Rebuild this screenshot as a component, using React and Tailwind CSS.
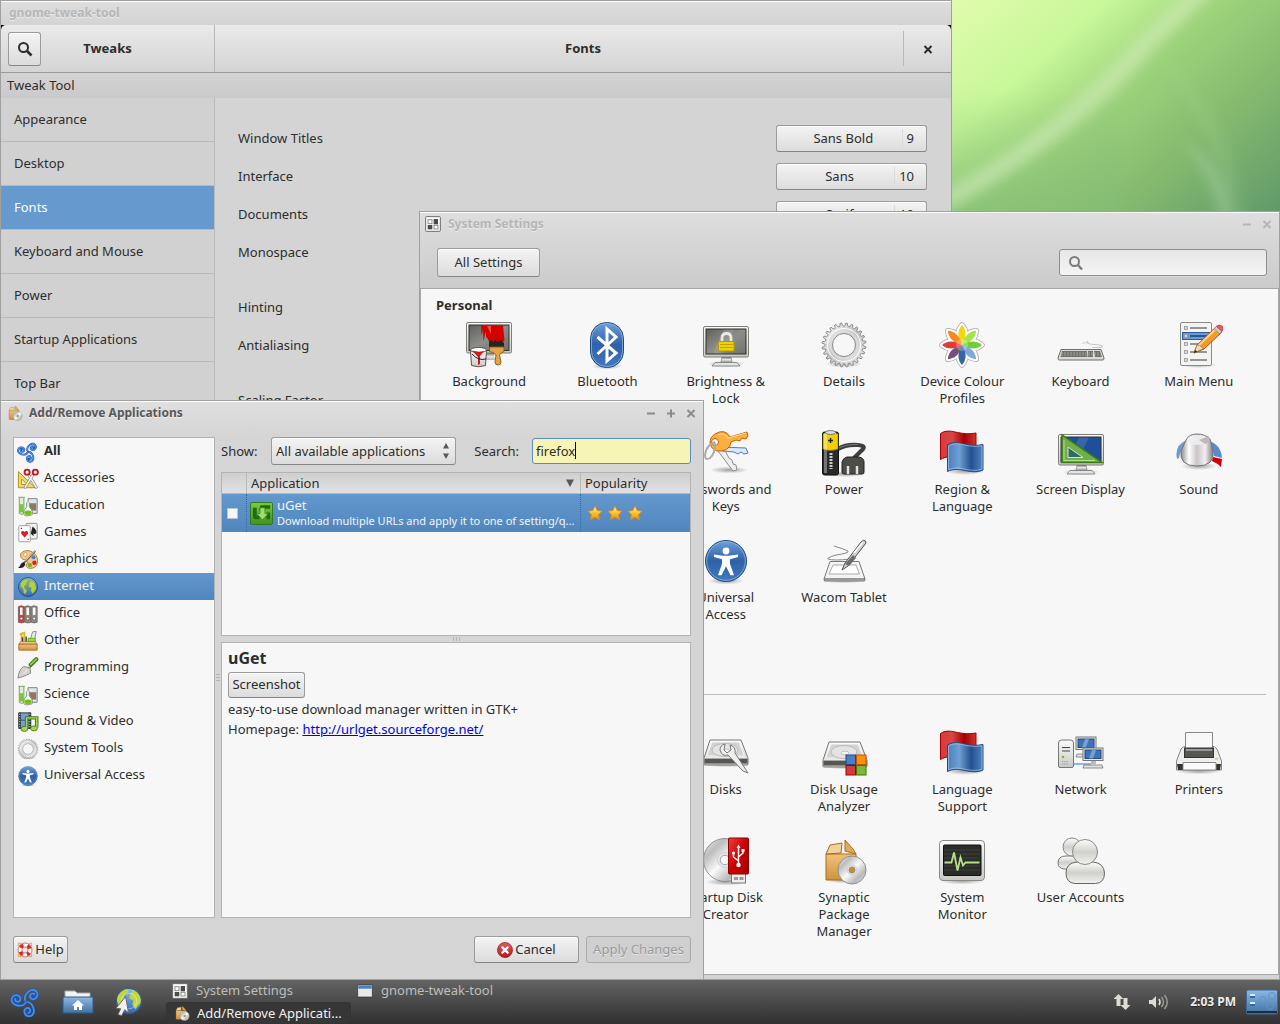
import React, { useState } from 'react'

/* ---------- shared drawing pieces ---------- */

// gradients used by most of the icons
function IconDefs() {
  const v = { x1: 0, y1: 0, x2: 0, y2: 1 }
  const h = { x1: 0, y1: 0, x2: 1, y2: 0 }
  const d = { x1: 0, y1: 0, x2: 1, y2: 1 }
  const grads = [
    ['screen', d, ['#5f605c', '#8d8e89', '#6f706b']],
    ['frame', v, ['#fafaf9', '#c9cac6']],
    ['stand', v, ['#6c6d69', '#e4e5e2', '#b4b5b1']],
    ['blue', v, ['#6f9fd6', '#2d61a8', '#4279bf']],
    ['globe', v, ['#8fbdf0', '#2f68b4']],
    ['metal', d, ['#ffffff', '#c4c4c4', '#f2f2f2']],
    ['disc', d, ['#f4f4f4', '#bdbdbd', '#fafafa', '#b9b9b9', '#eeeeee']],
    ['redflag', h, ['#d83a3a', '#d94545', '#a50000', '#d13434']],
    ['blueflag', h, ['#4c7fc0', '#6f9fd3', '#234f8f', '#5384c2']],
    ['wood', v, ['#f0c27c', '#cf923c']],
    ['knob', h, ['#8b8688', '#ffffff', '#c9c4c6', '#f3eef3', '#7d797b']],
    ['person', v, ['#ffffff', '#cfd0cb', '#f2f2f0']],
    ['star', v, ['#fff9b0', '#fbc52a', '#f08a12']],
    ['green', v, ['#7ccb3c', '#3f9420']],
    ['red', v, ['#e65b5b', '#b8161c']],
    ['usb', d, ['#f04040', '#cc0000', '#a40000']],
    ['folder', v, ['#8db8e4', '#41719f']],
  ]
  return (
    <svg width="0" height="0" className="absolute" aria-hidden="true">
      <defs>
        {grads.map(([id, dir, stops]) => (
          <linearGradient key={id} id={id} {...dir}>
            {stops.map((c, i) => <stop key={i} offset={i / (stops.length - 1)} stopColor={c} />)}
          </linearGradient>
        ))}
        <radialGradient id="shade">
          <stop offset="0" stopColor="#000" stopOpacity=".35" />
          <stop offset="1" stopColor="#000" stopOpacity="0" />
        </radialGradient>
      </defs>
    </svg>
  )
}

const gearPath = (() => {
  const n = 24
  let d = ''
  for (let i = 0; i < n; i++) {
    const pt = (r, o) => {
      const a = ((i + o) / n) * Math.PI * 2
      return `${(24 + r * Math.cos(a)).toFixed(1)} ${(24 + r * Math.sin(a)).toFixed(1)}`
    }
    d += `${i ? 'L' : 'M'}${pt(18.6, 0)}Q${pt(18.8, 0.25)} ${pt(22, 0.32)}L${pt(22, 0.58)}Q${pt(18.8, 0.7)} ${pt(18.6, 1)}`
  }
  return d + 'Z'
})()

const Shadow = ({ y = 43, rx = 20 }) => <ellipse cx="24" cy={y} rx={rx} ry="3.5" fill="url(#shade)" />

function Monitor({ children, screen = 'url(#screen)' }) {
  return (
    <>
      <Shadow y={43} rx={18} />
      <path d="M20 36h9l1 5h-11z" fill="url(#stand)" stroke="#777" strokeWidth=".6" />
      <path d="M13 41.5h22l3 3.5H10z" fill="#e3e4e1" stroke="#777" strokeWidth=".8" />
      <rect x="1.500" y="5.500" width="45" height="30.500" rx="1.500" fill="url(#frame)" stroke="#7d7e7a" />
      <rect x="4" y="8" width="40" height="25" fill={screen} stroke="#30302e" />
      <path d="M22 8.500h10L20 32.500h-9z" fill="#fff" opacity=".13" />
      {children}
    </>
  )
}

function Flags() {
  return (
    <>
      <ellipse cx="27" cy="42" rx="20" ry="4" fill="url(#shade)" />
      <path d="M2.500 4.500c6-4 12-2 17-1s12 2 18.500.500v24c-7 2-13 1-18 0s-12-1-17.500 2.500z" fill="url(#redflag)" stroke="#a40000" />
      <path d="M9.500 16c6-4 12-2 17-1s12 2 18.500.500v25.500c-6 3-13 1.500-18 .500s-12-2-17.500 1z" fill="url(#blueflag)" stroke="#204a87" />
      <path d="M10.500 17c6-3.500 11-2 16-1s11 2 17.500.700v23.500c-6 2-12 1-17 0s-11-2-16.500.500z" fill="none" stroke="#a8c6ea" strokeWidth=".7" />
    </>
  )
}

function Gear() {
  return (
    <>
      <Shadow y={43} rx={18} />
      <path d={gearPath} fill="url(#metal)" stroke="#8a8a8a" strokeWidth="1" />
      <circle cx="24" cy="24" r="16.500" fill="none" stroke="#fff" strokeWidth="1" />
      <circle cx="24" cy="24" r="11.500" fill="#f7f7f7" stroke="#8a8a8a" />
      <circle cx="24" cy="24" r="13.500" fill="none" stroke="#ddd" strokeWidth="1.500" />
    </>
  )
}

function Access() {
  return (
    <>
      <Shadow y={44} rx={18} />
      <circle cx="24" cy="24" r="20.500" fill="url(#blue)" stroke="#204a87" />
      <circle cx="24" cy="24" r="19.300" fill="none" stroke="#8fb4e0" strokeWidth=".8" />
      <circle cx="24" cy="14" r="3.400" fill="#fff" />
      <path d="M12 17.500l9 1.200h6l9-1.200v2.500l-8 2.200v4.500l4 11.500h-3.500l-4.500-9-4.500 9H16l4-11.500v-4.500l-8-2.200z" fill="#fff" />
    </>
  )
}

function Disc({ cx, cy, r, hole = '#f7f7f7' }) {
  return (
    <>
      <circle cx={cx} cy={cy} r={r} fill="url(#disc)" stroke="#888" strokeWidth=".9" />
      <circle cx={cx} cy={cy} r={r * 0.35} fill="#e6e6e6" stroke="#bbb" strokeWidth=".5" />
      <circle cx={cx} cy={cy} r={r * 0.22} fill={hole} stroke="#888" strokeWidth=".7" />
    </>
  )
}

function Drive() {
  return (
    <>
      <Shadow y={39} rx={22} />
      <path d="M8 15h31l7 18v6q0 1-1 1H3q-1 0-1-1v-6z" fill="url(#frame)" stroke="#777" />
      <path d="M2.500 33h43v5.500h-43z" fill="#555753" />
      <path d="M2.500 33h43" stroke="#fff" />
      <path d="M10 17h27l5.500 14H4.500z" fill="#d3d3d3" stroke="#fff" strokeWidth=".8" />
      <ellipse cx="23" cy="25" rx="13" ry="6.500" fill="#e4e4e4" stroke="#b0b0b0" strokeWidth=".8" />
      <ellipse cx="24" cy="26" rx="4" ry="1.800" fill="#f7f7f7" stroke="#aaa" strokeWidth=".6" />
    </>
  )
}

function Triskelion() {
  return (
    <g fill="none" strokeLinecap="round">
      {[-45, 75, 195].map(a => (
        <g key={a} transform={`translate(12 12) rotate(${a})`}>
          <path d="M0 0C1-5.500 11-5.500 11-.5C11 4 4.500 4.300 4.500.500C4.500-2 8.600-2.200 8.500.300C8.400 1.500 7 1.300 7 .600" stroke="#1c57b0" strokeWidth="2" />
          <path d="M0 0C1-5.500 11-5.500 11-.5C11 4 4.500 4.300 4.500.500C4.500-2 8.600-2.200 8.500.300" stroke="#4a8fe8" strokeWidth="1.200" />
        </g>
      ))}
    </g>
  )
}

function PackageBox() {
  return (
    <>
      <Shadow y={43} rx={18} />
      <path d="M6 17h30v26H6z" fill="url(#wood)" stroke="#a56b1e" />
      <path d="M6 17l4-9 12-2-1 10z" fill="#f3d29a" stroke="#a56b1e" />
      <path d="M36 17l-3-5-8-9v11z" fill="#e2ac5c" stroke="#a56b1e" />
      <Disc cx={32} cy={33} r={14} hole="#c98d2c" />
    </>
  )
}

function Pencil() {
  return (
    <>
      <path d="M16 32l3-8L38 6l6 5-18 17z" fill="#f29a2e" stroke="#9a5a12" />
      <path d="M20 25L39 7" stroke="#ffd08a" strokeWidth="2" />
      <path d="M36 7.500l2.500-2.200 5.500 5-2.500 2.500z" fill="#ccc" stroke="#777" strokeWidth=".6" />
      <path d="M38.500 5.300q3-2.500 5.800 0t-.3 5z" fill="#ef5a5a" stroke="#b33" strokeWidth=".7" />
      <path d="M16 32l3-8 2.500.500 4 3z" fill="#f3dcb6" stroke="#8d6a36" strokeWidth=".6" />
      <path d="M16 32l1.200-3 2 1.500z" fill="#222" />
    </>
  )
}

const petals = ['#f3d612', '#a9e34b', '#6fcf35', '#7fa8dd', '#3465a4', '#75507b', '#e03b3b', '#f68a1e']
const petal = 'M0 0C-5-8-4.500-15 0-20C4.500-15 5-8 0 0'

const icons = {
  background: (
    <>
      <rect x="1.500" y="1.500" width="45" height="30.500" rx="1.500" fill="url(#frame)" stroke="#7d7e7a" />
      <rect x="4" y="4" width="40" height="25.500" fill="url(#screen)" stroke="#30302e" />
      <path d="M20 32h9l1 7H19z" fill="url(#stand)" />
      <path d="M16 4.500h22l1.500 15q-2 3-4 1-2 2-4 0t-4 1-4-2-2-2l-1-7-2 10-.500-12-1.500 6z" fill="#d40000" />
      <path d="M22 5h4v8z" fill="#ff4a4a" />
      <path d="M24 21l2-2 2 2 2-2 3 2 3-2 3 3v4H24z" fill="#252525" />
      <path d="M24.500 26h14.500v4.500q-4 1.500-4.500 3.500l1.500 7q0 3-3 3t-3-3l1-7q-2-3-6.500-3.500z" fill="#e4a24a" stroke="#8b5716" strokeWidth=".9" />
      <path d="M5.500 29.500l1 15q7 2.500 14 0l1-15z" fill="url(#frame)" stroke="#555" />
      <ellipse cx="13.500" cy="29" rx="8" ry="2.500" fill="#fff" stroke="#555" />
      <path d="M7 29.500q6 2 12 .500l-4 5v8l-2 1v-8z" fill="#d3171d" />
      <path d="M7 33q6 7 14 5" fill="none" stroke="#222" />
    </>
  ),
  bluetooth: (
    <>
      <Shadow y={45} rx={15} />
      <rect x="7.500" y="1.500" width="33" height="45" rx="16" fill="url(#blue)" stroke="#204a87" />
      <rect x="8.500" y="2.500" width="31" height="43" rx="15" fill="none" stroke="#8fb4e0" strokeWidth=".8" />
      <path d="M14.500 16L33 32l-9 8V8l9 8L14.500 33" fill="none" stroke="#fff" strokeWidth="3" />
    </>
  ),
  brightness: (
    <Monitor>
      <path d="M20 21v-4q0-4.500 4.500-4.500T29 17v4" fill="none" stroke="#e8e8e8" strokeWidth="2.800" />
      <rect x="16.500" y="20.500" width="15.500" height="9.500" rx="1" fill="#edd400" stroke="#b59b00" />
      <path d="M18 23.500h13M18 26.500h13" stroke="#c4a000" />
    </Monitor>
  ),
  details: <Gear />,
  colour: (
    <g transform="translate(24 24)">
      {petals.map((c, i) => (
        <path key={c} d={petal} transform={`rotate(${i * 45})`} fill="#fff" stroke="#a9a9a9" strokeWidth="5.500" strokeLinejoin="round" />
      ))}
      {petals.map((c, i) => (
        <path key={c} d={petal} transform={`rotate(${i * 45})`} fill="#fff" stroke="#fff" strokeWidth="4" strokeLinejoin="round" />
      ))}
      <circle r="12" fill="#fff" />
      {petals.map((c, i) => (
        <path key={c} d={petal} transform={`rotate(${i * 45})`} fill={c} />
      ))}
      <circle r="6" fill="#fff" opacity=".25" />
    </g>
  ),
  keyboard: (
    <>
      <path d="M31 20q-2 2 2 3l9 1q5 1 2 2.500h-9" fill="none" stroke="#c6c6c6" strokeWidth="1.200" />
      <path d="M26 23q-1-2 6-1" fill="none" stroke="#d0d0d0" />
      <path d="M4 28.500h40l3 8.500q0 2-1 2H2q-1 0-1-2z" fill="#d9dad7" stroke="#6e6f6b" />
      <path d="M5 30h25l.500 6H3.500zM31 30h5v6h-5zM37 30h6l2 6h-7z" fill="#6f706b" />
      <path d="M4 32h40M4 34h41" stroke="#d9dad7" strokeWidth=".5" strokeDasharray="2 1" />
    </>
  ),
  menu: (
    <>
      <ellipse cx="23" cy="44" rx="18" ry="3" fill="url(#shade)" />
      <rect x="5.500" y="1.500" width="31" height="43" rx="1.500" fill="#f3f3f2" stroke="#8b8b89" />
      {[7, 15, 23, 31, 39].map((y, i) => (
        <g key={y}>
          {i === 1 && <rect x="7.500" y="11.500" width="27" height="7" fill="#6d98d0" stroke="#2a5ca0" />}
          <rect x="9.500" y={y - 1.5} width="3" height="3" fill="#d5d5d5" stroke="#999" strokeWidth=".8" />
          <path d={`M15 ${y}h17`} stroke={i === 1 ? '#234f8f' : '#8b8b89'} strokeWidth="1.800" />
        </g>
      ))}
      <g transform="translate(3 0)"><Pencil /></g>
    </>
  ),
  keys: (
    <>
      <ellipse cx="27" cy="41" rx="19" ry="3.500" fill="url(#shade)" />
      <path d="M16 22l15 20 4-1-1-5-3-1-1-4-3-2-5-9z" fill="#eee" stroke="#8d8f8a" />
      <path d="M18 18l26 1 2 5-4 1-3-2-3 2-4-2-12-1z" fill="#dbe8f8" stroke="#4c7fc0" />
      <path d="M13 5q10-6 15 3l17-5 1 4-2 3-4-1-2 3-4-1-5 2q-1 8-10 9T8 14q0-6 5-9z" fill="#fbb040" stroke="#ce5c00" />
      <path d="M16 6q6-3 10 3l18-5" fill="none" stroke="#ffe0a0" />
      <circle cx="13" cy="13" r="3.500" fill="#f7f7f7" stroke="#ce5c00" />
      <path d="M13 13Q4 16 3 26q0 6 5 3 5-4 5-15" fill="none" stroke="#aaaca7" strokeWidth="2" />
    </>
  ),
  power: (
    <>
      <ellipse cx="25" cy="45" rx="22" ry="3" fill="url(#shade)" />
      <path d="M18 20q8-5 20-4c7 .500 7 3 3 6l-7 7" fill="none" stroke="#3d3f3c" strokeWidth="4.200" />
      <path d="M19 19q8-4 19-3.500" fill="none" stroke="#777974" />
      <rect x="2.500" y="3" width="16" height="43" rx="2" fill="#2a2a29" stroke="#111" />
      <path d="M3 5q8-4 15 0v15q-8 3-15 0z" fill="#f0d000" stroke="#8a7500" strokeWidth=".6" />
      <rect x="4" y="4" width="3" height="40" fill="#fff" opacity=".35" />
      <ellipse cx="10.500" cy="3.500" rx="5" ry="2" fill="#ddd" stroke="#777" />
      <path d="M8 11.500h5M10.500 9v5" stroke="#222" strokeWidth="1.500" />
      <path d="M11 24v16" stroke="#ccc" strokeWidth="3" strokeDasharray="2 1" />
      <path d="M22 43V33q1-4 5-5h12q5 1 5 5v10q0 2-2 2H24q-2 0-2-2z" fill="#4b4d49" stroke="#222" />
      <path d="M28 37v8M37 37v8" stroke="#e0e0e0" strokeWidth="2.500" />
    </>
  ),
  flags: <Flags />,
  display: (
    <Monitor screen="#1d4f9a">
      <path d="M5 6v27.500h40z" fill="#6fb04a" stroke="#3a7d14" strokeWidth="1.500" />
      <path d="M11 18v10.500h15z" fill="#2f6a6a" stroke="#cfe9b8" />
      <path d="M7 11v20.500h31" fill="none" stroke="#b4dc93" />
    </Monitor>
  ),
  sound: (
    <>
      <ellipse cx="24" cy="37" rx="18" ry="4" fill="url(#shade)" />
      <path d="M2 30Q-1 16 12 11l2 4Q5 19 4 29z" fill="#6c9bd0" />
      <path d="M32 11q14 4 15 18l-8-2q-1-9-8-11z" fill="#5a8bc8" />
      <path d="M38 28l9 2-1 8q-4-4-9-6z" fill="#cc0000" />
      <path d="M11 11q3-6 11-6t13 5l3 12q2 15-16 15T6 22z" fill="url(#knob)" stroke="#77757a" />
      <path d="M12 11q3-5 10-5t12 4q-3 6-12 6t-10-5z" fill="#efedef" opacity=".9" />
      <path d="M24 11L34 7l1 6-5 2z" fill="#bdb8bc" />
    </>
  ),
  access: <Access />,
  wacom: (
    <>
      <Shadow y={43} rx={22} />
      <path d="M10 24.500h29l6 17.500H4z" fill="#f4f4f3" stroke="#777" />
      <path d="M4 42h41l-.500 2H4.500z" fill="#bbb" stroke="#777" />
      <path d="M13 28h23l3.500 9H9z" fill="#fff" stroke="#aaa" />
      <path d="M14 9q10 3 14 5 2 2-12 4-10 3-8 4 6 2 22 0" fill="none" stroke="#888" />
      <path d="M22 33l3-7L41 5q3-3 4.500-1t-1 4L28 29z" fill="#d0d0ce" stroke="#555" />
      <path d="M25 27l8-9 3 3-7 8z" fill="#6b6c69" />
      <path d="M34 16L43 5" stroke="#fff" strokeWidth="1.500" />
    </>
  ),
  disks: (
    <>
      <g transform="translate(0 -4)"><Drive /></g>
      <path d="M23 15q-5 1-5 6 2 7 8 5l15 16 5 2-13-20q1-6-5-8l1 5-4 3-3-3z" fill="#eee" stroke="#777" />
    </>
  ),
  usage: (
    <>
      <g transform="translate(1 -2)"><Drive /></g>
      <rect x="26" y="26" width="9.500" height="9.500" fill="#4a7fc4" stroke="#204a87" />
      <rect x="36.500" y="26" width="9.500" height="9.500" fill="#fb8f10" stroke="#c45500" />
      <rect x="26" y="36.500" width="9.500" height="9.500" fill="#d33a3a" stroke="#a40000" />
      <rect x="36.500" y="36.500" width="9.500" height="9.500" fill="#7cb83a" stroke="#3f7a06" />
    </>
  ),
  network: (
    <>
      <path d="M12 35h22" stroke="#8ab8e6" strokeWidth="2" />
      {[[19, 7], [26, 18]].map(([x, y]) => (
        <g key={x}>
          <path d={`M${x + 8} ${y + 12}h5v5h-5z`} fill="#bbb" />
          <path d={`M${x + 1} ${y + 18}h18l1 3H${x}z`} fill="#e2e2df" stroke="#777" strokeWidth=".8" />
          <rect x={x} y={y + 1} width="20" height="12.500" fill="#e8e8e5" stroke="#777" />
          <rect x={x + 2} y={y + 3} width="16" height="8.500" fill="#3f73b8" stroke="#204a87" />
          <path d={`M${x + 9} ${y + 3}h4l-3 8.500h-4z`} fill="#9bbce2" opacity=".6" />
        </g>
      ))}
      <path d="M1.500 14q0-3 3-3h9q3 0 3 3v23q0 1.500-1.500 1.500H3q-1.500 0-1.500-1.500z" fill="url(#frame)" stroke="#777" />
      <path d="M5 18.500h8M5 22h8" stroke="#444" />
      <circle cx="6" cy="28" r="1.300" fill="#73c216" />
      <path d="M5 32.500h6M5 35h6" stroke="#999" strokeDasharray="1.300 1" />
    </>
  ),
  printer: (
    <>
      <Shadow y={42} rx={23} />
      <path d="M6 20q2-3 6-3h24q4 0 6 3l4.500 12v9h-45v-9z" fill="#eeeeec" stroke="#888" />
      <path d="M2 35h7v6H3zM39 35h7l-1 6h-6z" fill="#333" />
      <path d="M10.500 20V3.500h27V20z" fill="#f8f8f8" stroke="#888" />
      <rect x="9.500" y="19" width="29" height="9.500" fill="#555753" stroke="#333" />
      <path d="M11 21h26" stroke="#999" strokeWidth="2" />
      <path d="M8 33.500h33v7.500H8z" fill="#fafafa" stroke="#888" />
      <rect x="40" y="29" width="3" height="1.500" fill="#b5d68a" />
    </>
  ),
  startup: (
    <>
      <Shadow y={45} rx={21} />
      <Disc cx={23} cy={23} r={21.5} />
      <rect x="29.500" y="36" width="14" height="10" fill="#eeeeec" stroke="#777" />
      <path d="M32 40h4v3h-4zM37.500 40h4v3h-4z" fill="#999" />
      <rect x="26.500" y="1" width="20" height="36" rx="1" fill="url(#usb)" stroke="#8c0000" />
      <path d="M36.500 28V9M36.500 24l-5-4v-4M36.500 20l4.500-4v-3" fill="none" stroke="#fff" strokeWidth="1.500" />
      <circle cx="36.500" cy="28" r="2.200" fill="#fff" />
      <circle cx="31.500" cy="16" r="1.600" fill="#fff" />
      <path d="M39.500 12h3v3h-3zM34.500 11l2-3.500 2 3.500z" fill="#fff" />
    </>
  ),
  synaptic: <PackageBox />,
  monitor: (
    <>
      <Shadow y={44} rx={22} />
      <rect x="1.500" y="3.500" width="45" height="40" rx="3.500" fill="url(#frame)" stroke="#8a8a88" />
      <rect x="5.500" y="8" width="37.500" height="30.500" rx="1" fill="#2a2c29" stroke="#111" />
      <path d="M6 13h36M6 17h36M6 21h36M6 29h36M6 33h36" stroke="#3d403c" />
      <path d="M6.500 25.500h7l2.500-10 3.500 18 3-13 2.500 8 2.500-3h14" fill="none" stroke="#b7e08a" strokeWidth="1.800" />
    </>
  ),
  users: (
    <>
      <path d="M1 26q0-7 8-7h12v13H7q-6-1-6-6z" fill="url(#person)" stroke="#777" />
      <circle cx="15" cy="10" r="9" fill="url(#person)" stroke="#888" />
      <path d="M9 36q0-10 11-11h16q11 1 11.500 11 0 10-9 10.500H18Q9 46 9 36z" fill="url(#person)" stroke="#666" />
      <circle cx="28" cy="15" r="12.500" fill="url(#person)" stroke="#888" />
    </>
  ),
  // 24 unit icons of the category list, panel and task list
  trisk: <Triskelion />,
  accessories: (
    <>
      <path d="M1.500 4v17.500H20z" fill="#f1dc5a" stroke="#a88c12" />
      <path d="M5 12v6h6z" fill="#f7f7f7" stroke="#a88c12" />
      <path d="M9 21L17 8M21 21L13 8" stroke="#8f8f8f" strokeWidth="3.200" strokeLinecap="round" />
      <path d="M9 21L17 8M21 21L13 8" stroke="#f2f2f2" strokeWidth="1.600" strokeLinecap="round" />
      <circle cx="11" cy="4.500" r="2.800" fill="#f7f7f7" stroke="#c4161c" strokeWidth="2" />
      <circle cx="20" cy="4.500" r="2.800" fill="#f7f7f7" stroke="#c4161c" strokeWidth="2" />
    </>
  ),
  science: (
    <>
      <path d="M12 4h10v16H12z" fill="#e4e6e2" stroke="#7a7c78" />
      <path d="M13 9h8v8h-8z" fill="#6f7d8d" />
      <path d="M15 11h4v4h-4z" fill="#c46a1e" />
      <path d="M1.500 2.500h7M2.500 3v17q2.500 2.500 5 0V3" fill="#dff2cf" stroke="#6a9a5a" />
      <path d="M3 10h4v9H3z" fill="#7cc63c" />
      <path d="M10.500 8v5q-5 6-3 8.500t9 0q2-3-3-8.500V8" fill="#eef6ea" stroke="#888a85" />
      <path d="M8 18q4-2 8 0 1 4-4 4t-4-4z" fill="#73c216" />
    </>
  ),
  games: (
    <>
      <rect x="10" y="1.500" width="12" height="17" rx="1" fill="#f2f2f2" stroke="#888" />
      <path d="M17 5q5 4 4 7-1 2-3 .500v3l-3-3z" fill="#222" />
      <rect x="2" y="4" width="12.500" height="17.500" rx="1" fill="#fff" stroke="#999" />
      <path d="M8.300 17L4.800 13q-1-3 1.500-3.200 1.500 0 2 1.500.500-1.500 2-1.500 2.500.200 1.500 3.200z" fill="#e01b24" />
      <path d="M4 7h1.500M11.500 19H13" stroke="#e01b24" strokeWidth="1.500" />
    </>
  ),
  graphics: (
    <>
      <path d="M4 5Q9 0 15 2.500q8 3 7.500 12Q21 22 13 21q-5-2-2-5 2-3-2-4-6-1-5-7z" fill="#f4c98a" stroke="#b97424" />
      <circle cx="9" cy="6" r="2" fill="#fff" stroke="#b97424" strokeWidth=".6" />
      <circle cx="18" cy="9" r="2.200" fill="#4a7fc4" />
      <circle cx="19" cy="15" r="2.400" fill="#d8202a" />
      <circle cx="14" cy="17.500" r="2.400" fill="#6cb52d" />
      <path d="M20 2L7 16" stroke="#6d6e6a" strokeWidth="2.200" />
      <path d="M19.500 2L9 13" stroke="#e6e6e6" strokeWidth=".8" />
      <path d="M8 14.500q-2-.500-4 2-1 3-3 4 6 1.500 8-3.500z" fill="#222" />
    </>
  ),
  internet: (
    <>
      <circle cx="12" cy="12" r="10.300" fill="url(#globe)" stroke="#204a87" />
      <path d="M4 8q3-5 8-5l1 2-3 2 1 2-3 2 1 3 2 2-2 4q-2-1-2-4T4 12z" fill="#b4d334" stroke="#7d9a1c" strokeWidth=".5" />
      <path d="M14 5l4 1q3 3 3 7-1 4-4 6l-2-3 .500-3-3-1 .500-4z" fill="#b4d334" stroke="#7d9a1c" strokeWidth=".5" />
    </>
  ),
  office: (
    <>
      {[['#d83a3a', 1.5], ['#a08468', 8.5], ['#8a8c88', 15.5]].map(([c, x]) => (
        <g key={c}>
          <path d={`M${x} 4q3-2 6.500 0v17q-3 1.500-6.500 0z`} fill={c} stroke="#5e5e5e" strokeWidth=".8" />
          <rect x={x + 1.8} y="5" width="2.800" height="8" fill="#fff" />
          <circle cx={x + 3.2} cy="17" r="1.500" fill="#fff" stroke="#444" strokeWidth=".6" />
        </g>
      ))}
    </>
  ),
  other: (
    <>
      <path d="M5 3v10M8 2v10M3 5l4-2" stroke="#d9b91c" strokeWidth="2" />
      <path d="M10 7v6M6 8v5" stroke="#5c3566" strokeWidth="1.600" />
      <path d="M14 12l3-10 4-.500-2 10z" fill="#e8e8e6" stroke="#888" />
      <path d="M12 9h8v4h-8z" fill="#8ae234" stroke="#4e9a06" strokeWidth=".7" />
      <path d="M4 12.500h16l2 3H2z" fill="#e9c48c" stroke="#a8702a" strokeWidth=".8" />
      <path d="M2 15.500h20V22H2z" fill="url(#wood)" stroke="#a8702a" />
    </>
  ),
  programming: (
    <>
      <path d="M1 23Q2 14 7 10.500l7 1 1 6Q9 21 1 23z" fill="#d4d5d2" stroke="#80827d" />
      <path d="M14 12l-7 6" stroke="#f4f4f4" />
      <path d="M12 12q4 0 3-4" stroke="#888" strokeWidth="1.500" fill="none" />
      <path d="M15 8.500L21 2.500" stroke="#3f7a10" strokeWidth="4.500" strokeLinecap="round" />
      <path d="M15 8L21 2.300" stroke="#8fd14f" strokeWidth="2" strokeLinecap="round" />
    </>
  ),
  video: (
    <>
      <path d="M2 2h13v17H2z" fill="#6ea0dc" stroke="#333" />
      <path d="M3 2v17M14 2v17" stroke="#2b2b2b" strokeWidth="2.600" />
      <path d="M3 3v16M14 3v16" stroke="#fff" strokeWidth="1.200" strokeDasharray="1.200 1.500" />
      <path d="M2 10h13" stroke="#2b4a7a" />
      <path d="M10.500 19V7.500h11V18" fill="none" stroke="#4e7a10" strokeWidth="3.800" />
      <ellipse cx="8" cy="19.500" rx="3.700" ry="2.700" fill="#a7d65d" stroke="#4e7a10" />
      <ellipse cx="18.500" cy="19" rx="3.700" ry="2.700" fill="#a7d65d" stroke="#4e7a10" />
      <path d="M10.500 19V7.500h11V18" fill="none" stroke="#a7d65d" strokeWidth="1.600" />
    </>
  ),
  ring: (
    <>
      <circle cx="12" cy="12" r="7.500" fill="none" stroke="#fff" strokeWidth="5" />
      <circle cx="12" cy="12" r="7.500" fill="none" stroke="#e2231a" strokeWidth="5" strokeDasharray="5.900 5.880" strokeDashoffset="3" transform="rotate(45 12 12)" />
      <circle cx="12" cy="12" r="10.500" fill="none" stroke="#a33" strokeWidth=".9" />
      <circle cx="12" cy="12" r="4.600" fill="none" stroke="#a33" strokeWidth=".9" />
      <path d="M2 2h4M2 2v4M22 2h-4M22 2v4M2 22h4M2 22v-4M22 22h-4M22 22v-4" stroke="#e4a24a" strokeWidth="1.500" />
    </>
  ),
  cancel: (
    <>
      <circle cx="12" cy="12" r="11.300" fill="url(#red)" stroke="#8f1015" />
      <path d="M8 8l8 8M16 8l-8 8" stroke="#fff" strokeWidth="3.400" strokeLinecap="round" />
    </>
  ),
  uget: (
    <>
      <rect x=".5" y=".5" width="23" height="23" rx="1.500" fill="url(#green)" stroke="#2f7a1a" />
      <path d="M3 6h4v8h3v4H6q-3 0-3-4zM11 3.500h10V7h-8v3h-3V6zM17 11h4v7h-4z" fill="#1f6a1f" />
      <path d="M10.500 6h5v6h3.500L13 18.500 7 12h3.500z" fill="#9be06a" stroke="#2f7a1a" strokeWidth=".6" />
    </>
  ),
  settings: (
    <>
      <rect x="1" y="1" width="22" height="22" rx="1" fill="#fff" stroke="#6b6b6b" strokeWidth="1.500" />
      <rect x="4.500" y="5.500" width="6" height="6" fill="#fff" stroke="#8b8d89" strokeWidth="1.500" />
      <rect x="13" y="4.500" width="6.500" height="8" fill="#4a4c48" />
      <rect x="4" y="13.500" width="7" height="6.500" fill="#4a4c48" />
      <rect x="13.500" y="14" width="6" height="5.500" fill="#fff" stroke="#8b8d89" strokeWidth="1.500" />
    </>
  ),
  windowIcon: (
    <>
      <rect x="1" y="3" width="22" height="18" rx="1" fill="#e9e9e6" stroke="#2b2b2b" />
      <rect x="2" y="4" width="20" height="4.500" fill="#4a7fc4" />
    </>
  ),
  star: <path d="M12 1.500l3.300 6.800 7.400 1-5.400 5.200 1.400 7.500L12 18.500 5.300 22l1.400-7.500L1.300 9.300l7.400-1z" fill="url(#star)" stroke="#e08a12" strokeWidth="1.300" strokeLinejoin="round" />,
  folder: (
    <>
      <path d="M3 9V2h10l2 2h13v6z" fill="#f4f4f4" stroke="#aaa" />
      <path d="M1 8h30v16H1z" fill="url(#folder)" stroke="#2d5a8c" />
      <path d="M16 11l6 5.500h-2V21h-3v-3h-2v3h-3v-4.500h-2z" fill="#fff" />
    </>
  ),
  browser: (
    <>
      <circle cx="15.500" cy="14.500" r="13" fill="url(#globe)" stroke="#2d5a8c" />
      <path d="M4 9q5-7 10-7l1 3-5 4 1 4-4 1 1 4-3 1-2-5z" fill="#c3d63a" />
      <path d="M19 3l5 3q4 4 3.500 10l-5.500 7-3-5 1-4-4-2 1-5z" fill="#c3d63a" />
      <circle cx="15.500" cy="14.500" r="8" fill="none" stroke="#fff" opacity=".4" />
      <path d="M12 10L2 22l5 .500L4 28.500l4 1 3-6 4 3z" fill="#f0f0f0" stroke="#666" />
    </>
  ),
}

function Icon({ name, box = 48, className }) {
  return <svg viewBox={`0 0 ${box} ${box}`} className={className} aria-hidden="true">{icons[name]}</svg>
}

/* ---------- window parts ---------- */

const glyphs = {
  min: 'M1 5.500h8',
  max: 'M1 5.500h8M5 1.500v8',
  close: 'M1.500 2l7 7M8.500 2l-7 7',
}

function WindowButton({ kind, label, className }) {
  return (
    <button aria-label={label} className={className}>
      <svg viewBox="0 0 10 10" className="size-2.5">
        <path d={glyphs[kind]} fill="none" stroke="currentColor" strokeWidth="2" />
      </svg>
    </button>
  )
}

const buttonLook = 'rounded-[3px] border border-[#9c9c9c] border-b-[#858585] bg-linear-to-b from-[#f4f4f4] to-[#dcdcdc] shadow-[inset_0_1px_0_#fff]'

/* ---------- Tweak tool ---------- */

const tweakPages = ['Appearance', 'Desktop', 'Fonts', 'Keyboard and Mouse', 'Power', 'Startup Applications', 'Top Bar']

function FontRow({ label, font, size }) {
  return (
    <div className="flex h-7 items-center justify-between">
      <span>{label}</span>
      {font && (
        <button className={`${buttonLook} flex h-[27px] w-[151px] items-center pr-3`} aria-label={`${label} font`}>
          <span className="flex-1 pl-2 text-center">{font}</span>
          <span className="border-l border-[#dadada] pl-1">{size}</span>
        </button>
      )}
    </div>
  )
}

function TweakWindow() {
  const [page, setPage] = useState('Fonts')
  return (
    <section className="absolute top-0 left-0 flex h-[600px] w-[952px] flex-col border border-[#a0a0a0] bg-[#d4d4d4]">
      <div className="h-6 shrink-0 border-t border-white bg-linear-to-b from-[#dedede] to-[#d3d3d3] px-2 text-xs leading-[22px] font-bold text-[#b6b6b6] text-shadow-[0_1px_0_#ebebeb]">gnome-tweak-tool</div>
      <div className="bg-black">
        <header className="flex h-12 rounded-t-[5px] border-b border-[#9a9a9a] bg-linear-to-b from-[#eaeaea] to-[#d4d4d4] font-bold">
          <div className="flex w-[214px] items-center border-r border-[#b8b8b8] pl-[7px]">
            <button aria-label="Search" className={`${buttonLook} grid h-[34px] w-[33px] place-items-center`}>
              <svg viewBox="0 0 16 16" className="size-4"><circle cx="6.500" cy="6.500" r="4.500" fill="none" stroke="#2d2d2d" strokeWidth="2" /><path d="M10 10l4.500 4.500" stroke="#2d2d2d" strokeWidth="2.600" /></svg>
            </button>
            <h2 className="flex-1 pr-10 pb-0.5 text-center">Tweaks</h2>
          </div>
          <h2 className="flex-1 self-center pb-0.5 pl-12 text-center">Fonts</h2>
          <div className="my-1.5 grid w-12 place-items-center border-l border-[#b8b8b8]">
            <WindowButton kind="close" label="Close" className="text-[#2d2d2d]" />
          </div>
        </header>
      </div>
      <button className="h-[25px] shrink-0 bg-linear-to-b from-[#d3d3d3] to-[#cacaca] px-1.5 pb-0.5 text-left">Tweak Tool</button>
      <div className="flex min-h-0 flex-1">
        <nav className="w-[214px] border-r border-[#bababa] bg-[#d1d1d1]">
          {tweakPages.map(p => (
            <button
              key={p}
              onClick={() => setPage(p)}
              className={page === p ? 'block h-11 w-full border-b border-[#bababa] bg-[#6699cd] px-[13px] pb-0.5 text-left text-white' : 'block h-11 w-full border-b border-[#bababa] px-[13px] pb-0.5 text-left'}
            >
              {p}
            </button>
          ))}
        </nav>
        <div className="flex flex-1 flex-col gap-2.5 py-[26px] pr-6 pl-[23px]">
          <FontRow label="Window Titles" font="Sans Bold" size="9" />
          <FontRow label="Interface" font="Sans" size="10" />
          <FontRow label="Documents" font="Serif" size="10" />
          <FontRow label="Monospace" />
          <div className="mt-[17px] flex flex-col gap-2.5">
            <FontRow label="Hinting" />
            <FontRow label="Antialiasing" />
          </div>
          <div className="mt-[17px]"><FontRow label="Scaling Factor" /></div>
        </div>
      </div>
    </section>
  )
}

/* ---------- System settings ---------- */

const personal = [
  { icon: 'background', label: 'Background' },
  { icon: 'bluetooth', label: 'Bluetooth' },
  { icon: 'brightness', label: 'Brightness & Lock' },
  { icon: 'details', label: 'Details' },
  { icon: 'colour', label: 'Device Colour Profiles' },
  { icon: 'keyboard', label: 'Keyboard' },
  { icon: 'menu', label: 'Main Menu' },
  { icon: 'keys', label: 'Passwords and Keys', third: true },
  { icon: 'power', label: 'Power' },
  { icon: 'flags', label: 'Region & Language' },
  { icon: 'display', label: 'Screen Display' },
  { icon: 'sound', label: 'Sound' },
  { icon: 'access', label: 'Universal Access', third: true },
  { icon: 'wacom', label: 'Wacom Tablet' },
]

const system = [
  { icon: 'disks', label: 'Disks', third: true },
  { icon: 'usage', label: 'Disk Usage Analyzer' },
  { icon: 'flags', label: 'Language Support' },
  { icon: 'network', label: 'Network' },
  { icon: 'printer', label: 'Printers' },
  { icon: 'startup', label: 'Startup Disk Creator', third: true },
  { icon: 'synaptic', label: 'Synaptic Package Manager' },
  { icon: 'monitor', label: 'System Monitor' },
  { icon: 'users', label: 'User Accounts' },
]

function SettingsGrid({ items }) {
  return (
    <div className="mr-5 ml-[9px] grid auto-rows-[108px] grid-cols-7">
      {items.map(it => (
        <button key={it.label} className={it.third ? 'col-start-3 flex flex-col items-center gap-1' : 'flex flex-col items-center gap-1'}>
          <Icon name={it.icon} className="size-12 shrink-0" />
          <span className="w-[92px] text-center leading-[17px]">{it.label}</span>
        </button>
      ))}
    </div>
  )
}

function SettingsWindow() {
  return (
    <section className="absolute top-[211px] right-0 bottom-0 left-[419px] flex flex-col border border-[#a0a0a0] bg-[#d4d4d4]">
      <div className="border-t border-white bg-linear-to-b from-[#dedede] to-[#cbcbcb]">
        <div className="flex h-[22px] items-center gap-[7px] px-[5px] text-[#b6b6b6]">
          <Icon name="settings" box={24} className="size-4" />
          <h1 className="flex-1 text-xs font-bold text-shadow-[0_1px_0_#ebebeb]">System Settings</h1>
          <div className="flex gap-2.5 pr-0.5">
            <WindowButton kind="min" label="Minimise" />
            <WindowButton kind="close" label="Close" />
          </div>
        </div>
        <div className="flex items-center justify-between pt-[13px] pr-3 pb-[11px] pl-[17px]">
          <button className={`${buttonLook} h-[29px] w-[103px] pb-0.5`}>All Settings</button>
          <div className="relative">
            <svg viewBox="0 0 16 16" className="absolute top-[6px] left-[9px] size-4"><circle cx="6.500" cy="6.500" r="4.500" fill="none" stroke="#7c7c7c" strokeWidth="2" /><path d="M10 10l4 4.500" stroke="#7c7c7c" strokeWidth="2.400" /></svg>
            <input type="search" aria-label="Search settings" className="block h-[27px] w-[208px] rounded-[3px] border border-[#8e8e8e] bg-linear-to-b from-[#e6e6e6] to-[#f5f5f5] pr-2 pl-8 shadow-[0_1px_0_#dedede] outline-none" />
          </div>
        </div>
      </div>
      <div className="mb-1 flex-1 border border-[#a8a8a8] bg-[#f7f7f7]">
        <h2 className="px-[15px] py-[7px] leading-[18px] font-bold">Personal</h2>
        <SettingsGrid items={personal} />
        <hr className="mx-3 mt-[49px] mb-[34px] border-[#bcbcbc]" />
        <SettingsGrid items={system} />
      </div>
    </section>
  )
}

/* ---------- Add/Remove applications ---------- */

const categories = [
  ['All', 'trisk', 24], ['Accessories', 'accessories', 24], ['Education', 'science', 24], ['Games', 'games', 24],
  ['Graphics', 'graphics', 24], ['Internet', 'internet', 24], ['Office', 'office', 24], ['Other', 'other', 24],
  ['Programming', 'programming', 24], ['Science', 'science', 24], ['Sound & Video', 'video', 24],
  ['System Tools', 'details', 48], ['Universal Access', 'access', 48],
]

function Grip({ vertical }) {
  return (
    <div className={vertical ? 'flex w-1.5 flex-col items-center justify-center gap-0.5 self-stretch' : 'flex h-1.5 items-center justify-center gap-0.5'}>
      {[0, 1, 2].map(i => <i key={i} className={vertical ? 'h-px w-1 bg-[#b5b5b5]' : 'h-1 w-px bg-[#b5b5b5]'} />)}
    </div>
  )
}

function AppsWindow() {
  const [category, setCategory] = useState('Internet')
  return (
    <section className="absolute top-[400px] bottom-0 left-0 flex w-[704px] flex-col border border-[#a0a0a0] bg-[#d5d5d5]">
      <div className="flex h-9 shrink-0 items-start border-t border-white bg-linear-to-b from-[#dfdfdf] to-[#d5d5d5] px-1.5 pt-0.5 text-[#8b8b8b]">
        <div className="flex h-[18px] flex-1 items-center gap-1.5">
          <Icon name="synaptic" className="size-4" />
          <h1 className="flex-1 text-xs font-bold text-[#585858] text-shadow-[0_1px_0_#f0f0f0]">Add/Remove Applications</h1>
          <div className="flex gap-2.5 pr-px">
            <WindowButton kind="min" label="Minimise" />
            <WindowButton kind="max" label="Maximise" />
            <WindowButton kind="close" label="Close" />
          </div>
        </div>
      </div>
      <div className="flex min-h-0 flex-1 pr-3 pl-3">
        <nav className="w-[202px] border border-[#b3b3b3] bg-[#f7f7f7]">
          {categories.map(([name, icon, box]) => (
            <button
              key={name}
              onClick={() => setCategory(name)}
              className={category === name ? 'flex h-[27px] w-full items-center gap-[5px] bg-linear-to-b from-[#6398ce] to-[#4f86bd] px-[3px] text-left text-[#f4f4f4]' : 'flex h-[27px] w-full items-center gap-[5px] px-[3px] text-left'}
            >
              <Icon name={icon} box={box} className="size-[22px]" />
              <span className={name === 'All' ? 'pb-[3px] font-bold' : 'pb-[3px]'}>{name}</span>
            </button>
          ))}
        </nav>
        <Grip vertical />
        <div className="flex min-w-0 flex-1 flex-col">
          <div className="flex items-center pb-[7px]">
            <label htmlFor="show" className="w-[50px]">Show:</label>
            <div className="relative">
              <select id="show" className={`${buttonLook} block h-7 w-[185px] appearance-none pl-1`}>
                <option>All available applications</option>
              </select>
              <svg viewBox="0 0 6 16" className="pointer-events-none absolute top-1.5 right-[7px] h-4 w-1.5 fill-[#5a5a5a]"><path d="M0 5.500L3 0l3 5.500zM0 10.500h6L3 16z" /></svg>
            </div>
            <label htmlFor="search" className="ml-auto pr-[13px]">Search:</label>
            <div className="relative">
              <input id="search" defaultValue="firefox" className="block h-[26px] w-[159px] rounded-[3px] border border-[#5b8dc0] bg-[#f7f5b5] px-[3px] outline-none" />
              <i className="absolute top-1 left-[43px] h-[17px] w-px bg-black" />
            </div>
          </div>
          <div className="h-[164px] border border-[#b3b3b3] bg-[#f7f7f7]">
            <table className="w-full table-fixed border-separate border-spacing-0 text-left">
              <thead>
                <tr className="h-[21px] bg-linear-to-b from-[#cfcfcf] to-[#e2e2e2]">
                  <th className="w-[25px] border-r border-b border-[#b9b9b9]" aria-label="Install" />
                  <th className="border-r border-b border-[#b9b9b9] px-1 leading-5 font-normal">
                    <span className="flex items-center justify-between">
                      Application
                      <svg viewBox="0 0 8 8" className="mr-0.5 size-2 fill-[#5a5a5a]"><path d="M0 .500h8L4 8z" /></svg>
                    </span>
                  </th>
                  <th className="w-[109px] border-b border-[#b9b9b9] px-1 leading-5 font-normal">Popularity</th>
                </tr>
              </thead>
              <tbody>
                <tr className="h-[38px] bg-linear-to-b from-[#6398ce] to-[#4f86bd] text-[#f4f4f4]">
                  <td className="border-r border-dotted border-[#3c6a98] pl-[5px]">
                    <input type="checkbox" aria-label="Install uGet" className="block size-[11px] appearance-none border border-[#b9c4cf] bg-[#f7f7f7]" />
                  </td>
                  <td className="border-r border-dotted border-[#3c6a98] px-[3px]">
                    <div className="flex items-center gap-1">
                      <Icon name="uget" box={24} className="size-[23px] shrink-0" />
                      <div className="pb-0.5 whitespace-nowrap">
                        <div className="leading-4">uGet</div>
                        <div className="text-[11px] leading-[15px]">Download multiple URLs and apply it to one of setting/q...</div>
                      </div>
                    </div>
                  </td>
                  <td className="px-1.5">
                    <div className="flex gap-1" role="img" aria-label="3 stars">
                      {[1, 2, 3].map(n => <Icon key={n} name="star" box={24} className="size-4" />)}
                    </div>
                  </td>
                </tr>
              </tbody>
            </table>
          </div>
          <Grip />
          <article className="flex-1 border border-[#b3b3b3] bg-[#f7f7f7] px-1.5 pt-1">
            <h2 className="text-base leading-[22px] font-bold">uGet</h2>
            <button className={`${buttonLook} mt-[3px] mb-px h-[26px] w-[77px] pb-0.5`}>Screenshot</button>
            <p className="leading-5">easy-to-use download manager written in GTK+</p>
            <p className="leading-5">Homepage: <a href="http://urlget.sourceforge.net/" className="text-[#0000ee] underline">http://urlget.sourceforge.net/</a></p>
          </article>
        </div>
      </div>
      <div className="flex gap-[7px] px-3 pt-[18px] pb-4">
        <button className={`${buttonLook} mr-auto flex h-[27px] w-[55px] items-center justify-center gap-0.5`}>
          <Icon name="ring" box={24} className="size-4" /><span className="pb-0.5">Help</span>
        </button>
        <button className={`${buttonLook} flex h-[27px] w-[105px] items-center justify-center gap-0.5`}>
          <Icon name="cancel" box={24} className="size-4" /><span className="pb-0.5">Cancel</span>
        </button>
        <button disabled className="h-[27px] w-[105px] rounded-[3px] border border-[#ababab] bg-[#cfcfcf] pb-0.5 text-[#9b9b9b] text-shadow-[0_1px_0_#e6e6e6]">Apply Changes</button>
      </div>
    </section>
  )
}

/* ---------- desktop ---------- */

function Wallpaper() {
  return (
    <svg viewBox="0 0 1280 980" preserveAspectRatio="none" className="absolute inset-0 size-full" aria-hidden="true">
      <defs>
        <linearGradient id="wall" gradientUnits="userSpaceOnUse" x1="990" y1="-40" x2="1240" y2="250">
          <stop offset="0" stopColor="#e2fbae" />
          <stop offset=".28" stopColor="#c8f89a" />
          <stop offset=".47" stopColor="#9fd47c" />
          <stop offset=".7" stopColor="#86bb6f" />
          <stop offset="1" stopColor="#5f996a" />
        </linearGradient>
        <linearGradient id="wallLeft" gradientUnits="userSpaceOnUse" x1="0" y1="90" x2="0" y2="215">
          <stop offset="0" stopColor="#8cc27a" stopOpacity="0" />
          <stop offset="1" stopColor="#84bd76" stopOpacity=".75" />
        </linearGradient>
        <filter id="soft"><feGaussianBlur stdDeviation="6" /></filter>
      </defs>
      <rect width="1280" height="980" fill="url(#wall)" />
      <rect x="900" y="90" width="220" height="200" fill="url(#wallLeft)" filter="url(#soft)" />
      <g filter="url(#soft)">
        <path d="M945 212Q1085 135 1155 48L1222-15h-30L1135 40Q1060 125 945 190z" fill="#d8efc4" opacity=".5" />
        <path d="M1160 60q80 60 85 170h-16q-10-100-69-170z" fill="#b6dca8" opacity=".15" />
        <path d="M1180 140q30 30 38 80h14q-5-60-52-80z" fill="#c4e2bc" opacity=".3" />
      </g>
    </svg>
  )
}

function Taskbar() {
  return (
    <footer className="flex h-11 shrink-0 items-center bg-linear-to-b from-[#646464] to-[#313131] text-[#bdbdbd] text-shadow-[0_1px_1px_#222]">
      <div className="flex items-center gap-5 pl-2.5">
        <button aria-label="Menu"><Icon name="trisk" box={24} className="size-8" /></button>
        <button aria-label="Home folder"><svg viewBox="0 0 32 26" className="h-[26px] w-8">{icons.folder}</svg></button>
        <button aria-label="Web browser"><Icon name="browser" box={31} className="size-[30px]" /></button>
      </div>
      <div className="ml-[22px] grid h-full grid-flow-col grid-cols-[185px_185px] grid-rows-2">
        <button className="flex items-center gap-2 px-1.5"><Icon name="settings" box={24} className="size-4" /><span className="pb-0.5">System Settings</span></button>
        <button className="flex min-w-0 items-center gap-[7px] rounded-[3px] border border-[#333] bg-[#363636] px-[7px] text-[#f0f0f0]">
          <Icon name="synaptic" className="size-4 shrink-0" />
          <span>Add/Remove Applicati...</span>
        </button>
        <button className="flex items-center gap-2 px-1.5"><Icon name="windowIcon" box={24} className="size-4" /><span className="pb-0.5">gnome-tweak-tool</span></button>
      </div>
      <div className="ml-auto flex items-center pr-0.5">
        <svg viewBox="0 0 18 18" className="mr-[18px] size-[18px] fill-[#dedbd3]" aria-label="Network"><path d="M5.500 1l5 5h-3v7h-4V6h-3zM12.500 17l-5-5h3V5h4v7h3z" /></svg>
        <svg viewBox="0 0 20 18" className="mr-[21px] h-[18px] w-5" aria-label="Volume">
          <path d="M0 7h3l4-4v12l-4-4H0z" fill="#dedbd3" />
          <path d="M10 6q2 3 0 6" fill="none" stroke="#dedbd3" strokeWidth="1.600" />
          <path d="M12.500 4q4 5 0 10M15.500 2q5.500 7 0 14" fill="none" stroke="#9a9893" strokeWidth="1.500" />
        </svg>
        <time className="mr-2.5 text-xs font-bold text-[#eeeeec]">2:03 PM</time>
        <button aria-label="Show desktop">
          <svg viewBox="0 0 32 26" className="h-[26px] w-8">
            <rect x=".5" y="1" width="31" height="24" rx="1.500" fill="url(#folder)" stroke="#3d6a9c" />
            <path d="M1 23h30" stroke="#1e2c3c" strokeWidth="2" />
            <path d="M4 5h5v4H4zM4 13h5v4H4z" fill="#dcecfb" />
            <path d="M4 7h5v2H4zM4 15h5v2H4z" fill="#2f68ad" />
            <g fill="none" stroke="#5f93cb"><circle cx="17" cy="11" r="3.500" /><circle cx="26" cy="7" r="3.500" /><circle cx="24" cy="17" r="3.500" /></g>
          </svg>
        </button>
      </div>
    </footer>
  )
}

export default function App() {
  return (
    <div className="flex h-screen flex-col overflow-hidden font-['Noto_Sans',sans-serif] text-[13px] leading-[18px] text-[#2d2d2d]">
      <IconDefs />
      <main className="relative min-h-0 flex-1">
        <Wallpaper />
        <TweakWindow />
        <SettingsWindow />
        <AppsWindow />
      </main>
      <Taskbar />
    </div>
  )
}
